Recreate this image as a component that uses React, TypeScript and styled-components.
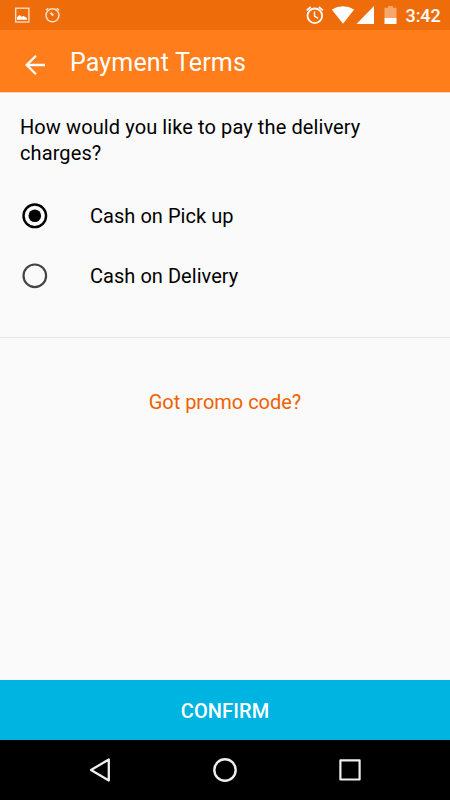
import React, { useState } from "react";
import styled, { createGlobalStyle } from "styled-components";

const GlobalStyle = createGlobalStyle`
  * { box-sizing: border-box; }
  body { margin: 0; font-family: Roboto, sans-serif; }
`;

const Screen = styled.div`
  width: 450px;
  height: 800px;
  display: flex;
  flex-direction: column;
  background: #fafafa;
  overflow: hidden;
`;

const StatusBar = styled.div`
  height: 30px;
  flex: none;
  display: flex;
  justify-content: space-between;
  background: #ef6c0a;
  color: #fff;
`;

const StatusGroup = styled.div`
  display: flex;
`;

const Clock = styled.span`
  width: 45px;
  padding: 1px 0 0 0.5px;
  font-size: 18px;
  font-weight: 500;
  line-height: 30px;
  letter-spacing: -0.1px;
`;

const AppBar = styled.header`
  height: 63px;
  flex: none;
  display: flex;
  background: #ff7d1a;
  border-bottom: 1px solid #ffd3b3;
`;

const BackButton = styled.button`
  width: 70px;
  height: 62px;
  padding: 0;
  border: 0;
  background: none;
  display: flex;
`;

const Title = styled.h1`
  margin: 0;
  color: #fff;
  font-size: 25px;
  font-weight: 400;
  line-height: 66px;
  letter-spacing: 0.15px;
`;

const Content = styled.main`
  flex: 1;
  display: flex;
  flex-direction: column;
  color: #000;
`;

const Question = styled.p`
  margin: 0;
  padding: 21px 60px 0 20px;
  font-size: 20px;
  line-height: 26px;
  letter-spacing: 0.1px;
`;

const Options = styled.div`
  height: 172px;
  padding: 20px 0 0 20px;
  border-bottom: 1px solid #e7e7e7;
`;

const Option = styled.button`
  height: 60px;
  width: 100%;
  padding: 0;
  border: 0;
  background: none;
  display: flex;
  align-items: center;
  gap: 40px;
  color: #000;
  font: 400 20px/24px Roboto, sans-serif;
  letter-spacing: 0.04px;
  text-align: left;
`;

const PromoLink = styled.button`
  align-self: center;
  margin-top: 52px;
  padding: 0;
  border: 0;
  background: none;
  color: #ef6000;
  font: 400 20px/24px Roboto, sans-serif;
  letter-spacing: -0.02px;
`;

const ConfirmButton = styled.button`
  height: 60px;
  flex: none;
  padding: 2px 0 0;
  border: 0;
  background: #00b4e1;
  color: #fff;
  font: 500 20px/24px Roboto, sans-serif;
  letter-spacing: 0.1px;
`;

const NavBar = styled.nav`
  height: 60px;
  flex: none;
  padding: 0 37px;
  display: grid;
  grid-template-columns: repeat(3, 1fr);
  place-items: center;
  background: #000;
`;

function Radio({ checked }: { checked: boolean }) {
  return (
    <svg width="30" height="30" fill="none">
      <circle cx="14.8" cy="14.8" r="11.3" stroke={checked ? "#000" : "#444"} strokeWidth={checked ? 2.4 : 2.2} />
      {checked && <circle cx="14.8" cy="14.8" r="6.3" fill="#000" />}
    </svg>
  );
}

export default function App() {
  const [selected, setSelected] = useState("Cash on Pick up");

  return (
    <>
      <GlobalStyle />
      <Screen>
        <StatusBar>
          <StatusGroup>
            <svg width="70" height="30" fill="none" stroke="#fbe2cf">
              <rect x="15.7" y="8.2" width="13.2" height="13.8" strokeWidth="1.3" />
              <path d="M17 19.8v-2.5l2.7-2.2 2 1.7 1.8-.8 3.5 2v1.8Z" fill="#fff" stroke="none" />
              <circle cx="52.5" cy="15.3" r="6.5" strokeWidth="1.4" />
              <path d="M46 10.3 48.2 8.2M59 10.3 56.8 8.2" strokeWidth="1.5" />
              <path d="M50.5 12.6 53.2 15.5" strokeWidth="2" />
            </svg>
          </StatusGroup>
          <StatusGroup>
            <svg width="105" height="30" fill="none">
              <circle cx="14.8" cy="15.8" r="7.3" stroke="#fff" strokeWidth="1.8" />
              <path d="M6.7 10.3 10.7 7M22.9 10.3 18.9 7" stroke="#fff" strokeWidth="1.7" />
              <path d="M14.5 11.5v4.6l3.6 2.2" stroke="#fff" strokeWidth="1.4" />
              <path d="M31.8 9.5Q43 2.8 54.2 9.5L43 23.8Z" fill="#fff" />
              <path d="M74 6v18H56.5Z" fill="#fff" />
              <path d="M84.5 7.8H88V6h5v1.8h3.5V18h-12Z" fill="#f6a76c" />
              <path d="M84.5 18h12v6h-12Z" fill="#fff" />
            </svg>
            <Clock>3:42</Clock>
          </StatusGroup>
        </StatusBar>
        <AppBar>
          <BackButton aria-label="Back">
            <svg width="70" height="62" fill="none" stroke="#fff" strokeWidth="2.3">
              <path d="M45 35H27M36 25.7 26.7 35 36 44.3" />
            </svg>
          </BackButton>
          <Title>Payment Terms</Title>
        </AppBar>
        <Content>
          <Question>How would you like to pay the delivery charges?</Question>
          <Options role="radiogroup">
            {["Cash on Pick up", "Cash on Delivery"].map((label) => (
              <Option key={label} role="radio" aria-checked={selected === label} onClick={() => setSelected(label)}>
                <Radio checked={selected === label} />
                {label}
              </Option>
            ))}
          </Options>
          <PromoLink>Got promo code?</PromoLink>
        </Content>
        <ConfirmButton>CONFIRM</ConfirmButton>
        <NavBar>
          <svg width="26" height="26" fill="none" stroke="#eee" strokeWidth="2.3" strokeLinejoin="round">
            <path d="M21.8 2.5v21L4 13Z" />
          </svg>
          <svg width="26" height="26" fill="none" stroke="#eee" strokeWidth="2.4">
            <circle cx="13" cy="13" r="10.7" />
          </svg>
          <svg width="26" height="26" fill="none" stroke="#eee" strokeWidth="2.2" strokeLinejoin="round">
            <rect x="3.4" y="3.3" width="19.2" height="19.2" />
          </svg>
        </NavBar>
      </Screen>
    </>
  );
}
